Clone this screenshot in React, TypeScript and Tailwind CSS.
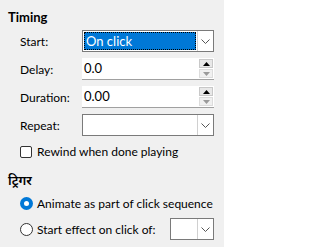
import React from 'react';

const font = { fontFamily: 'Lato, "Noto Sans", "Noto Sans Devanagari", sans-serif' };

function Chevron() {
  return (
    <svg width="9" height="5" viewBox="0 0 9 5" className="text-[#555]">
      <path d="M0.5 0.5 L4.5 4.5 L8.5 0.5" fill="none" stroke="currentColor" strokeWidth="1" />
    </svg>
  );
}

function Combo({ value, active, className }: { value?: string; active?: boolean; className: string }) {
  return (
    <div className={`flex shrink-0 h-[22px] border border-[#7a7a7a] bg-white ${className}`}>
      <div className="flex-1 p-px">
        {active ? (
          <div className="h-full bg-[#0078d7] text-white outline-1 outline-dotted outline-black -outline-offset-1 pl-[2px] leading-[19px] text-[13px]">
            {value}
          </div>
        ) : (
          <div className="h-full" />
        )}
      </div>
      <div className="w-[16px] border-l border-[#d0d0d0] flex items-center justify-center">
        <Chevron />
      </div>
    </div>
  );
}

function Spin({ value }: { value: string }) {
  return (
    <div className="flex shrink-0 h-[22px] w-[132px] bg-white border-b border-[#a0a0a0]">
      <div className="flex-1 pl-[2px] leading-[21px] text-[13px] text-black">{value}</div>
      <div className="w-[15px] flex flex-col gap-px py-px pr-px">
        <div className="flex-1 bg-[#e8e8e8] border border-[#c8c8c8] flex items-center justify-center">
          <svg width="7" height="4" viewBox="0 0 7 4"><path d="M0 4 L3.5 0 L7 4 Z" fill="#000" /></svg>
        </div>
        <div className="flex-1 bg-[#f0f0f0] border border-[#dcdcdc] flex items-center justify-center">
          <svg width="7" height="4" viewBox="0 0 7 4"><path d="M0 0 L3.5 4 L7 0 Z" fill="#9a9a9a" /></svg>
        </div>
      </div>
    </div>
  );
}

export default function App() {
  return (
    <div className="w-[224px] h-[247px] bg-[#f0f0f0] text-[12px] leading-[19px] text-black overflow-hidden whitespace-nowrap" style={font}>
      {/* ── Timing ── */}
      <div className="pl-[8px] pt-[9px] font-bold text-[13px] leading-[16px]">Timing</div>

      <div className="pl-[20px] pr-[10px] mt-[5px] flex flex-col gap-[6px]">
        <div className="flex items-center">
          <span className="w-[62px]">Start:</span>
          <Combo value="On click" active className="w-[132px]" />
        </div>
        <div className="flex items-center">
          <span className="w-[62px]">Delay:</span>
          <Spin value="0.0" />
        </div>
        <div className="flex items-center">
          <span className="w-[62px]">Duration:</span>
          <Spin value="0.00" />
        </div>
        <div className="flex items-center">
          <span className="w-[62px]">Repeat:</span>
          <Combo className="w-[132px]" />
        </div>
        <label className="flex items-center gap-[5px]">
          <span className="shrink-0 w-[12px] h-[12px] border border-[#333] rounded-[2px] bg-white" />
          <span>Rewind when done playing</span>
        </label>
      </div>

      {/* ── Trigger ── */}
      <div className="pl-[8px] mt-[10px] font-semibold text-[13px] leading-[18px]">ट्रिगर</div>

      <div className="pl-[20px] pr-[10px] mt-[3px] flex flex-col gap-[4px]">
        <div className="flex items-center gap-[4px] h-[22px]">
          <span className="shrink-0 w-[13px] h-[13px] rounded-full bg-[#0078d7] flex items-center justify-center">
            <span className="w-[5px] h-[5px] rounded-full bg-white" />
          </span>
          <span>Animate as part of click sequence</span>
        </div>
        <div className="flex items-center gap-[4px]">
          <span className="shrink-0 w-[13px] h-[13px] rounded-full border border-[#333] bg-white" />
          <span>Start effect on click of:</span>
          <Combo className="w-[44px] ml-auto" />
        </div>
      </div>
    </div>
  );
}
